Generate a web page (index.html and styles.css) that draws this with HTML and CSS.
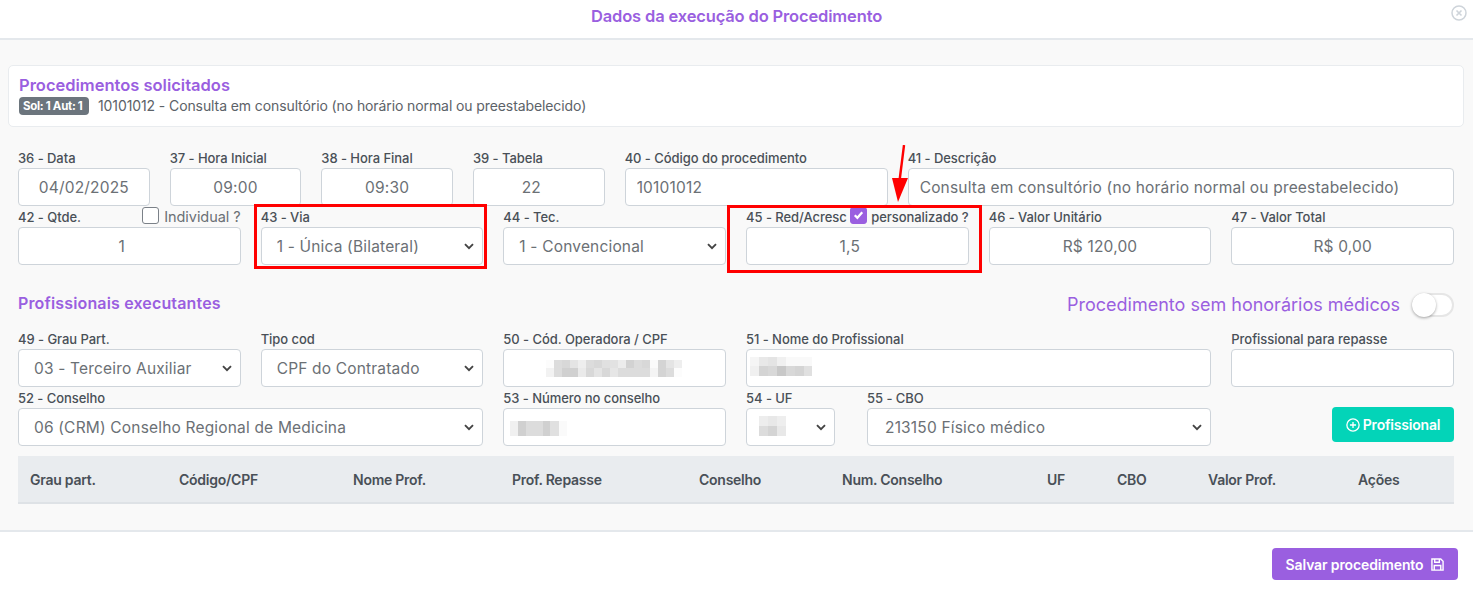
FILE: index.html
```html
<!DOCTYPE html>
<html lang="pt-BR">
<head>
<meta charset="utf-8">
<title>Dados da execução do Procedimento</title>
<link rel="stylesheet" href="styles.css">
</head>
<body>
<div class="modal">
  <header class="modal-head">
    <h1>Dados da execução do Procedimento</h1>
    <svg class="close" viewBox="0 0 16 16" width="16" height="16" fill="none" stroke="#ced4da"><circle cx="8" cy="8" r="7" stroke-width="1.5"/><path d="M5.5 5.5l5 5M10.5 5.5l-5 5" stroke-width="1.6"/></svg>
  </header>
  <main class="modal-body">
    <section class="card">
      <h2>Procedimentos solicitados</h2>
      <p class="proc"><span class="badge">Sol: 1 Aut: 1</span>10101012 - Consulta em consultório (no horário normal ou preestabelecido)</p>
    </section>
    <div class="form">
      <div class="row-top">
        <div class="field w132"><label>36 - Data</label><input class="center" value="04/02/2025"></div>
        <div class="field w132"><label>37 - Hora Inicial</label><input class="center" value="09:00"></div>
        <div class="field w132"><label>38 - Hora Final</label><input class="center" value="09:30"></div>
        <div class="field w132"><label>39 - Tabela</label><input class="center num" value="22"></div>
        <div class="field w263"><label>40 - Código do procedimento</label><input value="10101012"></div>
        <div class="field grow"><label>41 - Descrição</label><input value="Consulta em consultório (no horário normal ou preestabelecido)"></div>
      </div>
      <div class="grid six">
        <div class="field">
          <div class="label-row"><label>42 - Qtde.</label><span class="check-label"><span class="checkbox"></span>Individual ?</span></div>
          <input class="center num" value="1">
        </div>
        <div class="field"><label>43 - Via</label><select><option>1 - Única (Bilateral)</option></select></div>
        <div class="field"><label>44 - Tec.</label><select><option>1 - Convencional</option></select></div>
        <div class="field">
          <div class="label-row"><label>45 - Red/Acresc</label><span class="checkbox checked"><svg viewBox="0 0 16 16" width="16" height="16" fill="none" stroke="#fff" stroke-width="2.4"><path d="M4 8.2l2.8 2.8L12 5"/></svg></span><label>personalizado ?</label></div>
          <input class="center num" value="1,5">
        </div>
        <div class="field"><label>46 - Valor Unitário</label><input class="center" value="R$ 120,00"></div>
        <div class="field"><label>47 - Valor Total</label><input class="center" value="R$ 0,00"></div>
      </div>
      <div class="section-head">
        <h2>Profissionais executantes</h2>
        <div class="toggle-wrap"><span>Procedimento sem honorários médicos</span><span class="toggle"><span class="knob"></span></span></div>
      </div>
      <div class="grid six">
        <div class="field"><label>49 - Grau Part.</label><select><option>03 - Terceiro Auxiliar</option></select></div>
        <div class="field"><label>Tipo cod</label><select><option>CPF do Contratado</option></select></div>
        <div class="field">
          <label>50 - Cód. Operadora / CPF</label>
          <div class="masked"><input>
            <svg class="mosaic m-cpf" width="136" height="17" viewBox="0 0 136 17">
              <rect x="0" y="0" width="8" height="8" fill="#fcfcfc"/><rect x="8" y="0" width="8" height="8" fill="#dcdcdc"/><rect x="16" y="0" width="8" height="8" fill="#d8d8d8"/><rect x="24" y="0" width="8" height="8" fill="#e4e4e4"/><rect x="32" y="0" width="8" height="8" fill="#eeeeee"/><rect x="40" y="0" width="8" height="8" fill="#dcdcdc"/><rect x="48" y="0" width="8" height="8" fill="#d8d8d8"/><rect x="56" y="0" width="8" height="8" fill="#e0e0e0"/><rect x="64" y="0" width="8" height="8" fill="#e2e2e2"/><rect x="72" y="0" width="8" height="8" fill="#ececec"/><rect x="80" y="0" width="8" height="8" fill="#d2d2d2"/><rect x="88" y="0" width="8" height="8" fill="#dcdcdc"/><rect x="96" y="0" width="8" height="8" fill="#d8d8d8"/><rect x="104" y="0" width="8" height="8" fill="#fafafa"/><rect x="112" y="0" width="8" height="8" fill="#d4d4d4"/><rect x="120" y="0" width="8" height="8" fill="#e4e4e4"/><rect x="128" y="0" width="8" height="8" fill="#eeeeee"/>
              <rect x="0" y="8" width="8" height="9" fill="#f2f2f2"/><rect x="8" y="8" width="8" height="9" fill="#dcdcdc"/><rect x="16" y="8" width="16" height="9" fill="#d0d0d0"/><rect x="32" y="8" width="8" height="9" fill="#eaeaea"/><rect x="40" y="8" width="8" height="9" fill="#d8d8d8"/><rect x="48" y="8" width="8" height="9" fill="#e4e4e4"/><rect x="56" y="8" width="8" height="9" fill="#d8d8d8"/><rect x="64" y="8" width="8" height="9" fill="#e6e6e6"/><rect x="72" y="8" width="8" height="9" fill="#dcdcdc"/><rect x="80" y="8" width="24" height="9" fill="#dcdcdc"/><rect x="104" y="8" width="8" height="9" fill="#f4f4f4"/><rect x="112" y="8" width="8" height="9" fill="#d4d4d4"/><rect x="120" y="8" width="8" height="9" fill="#dcdcdc"/><rect x="128" y="8" width="8" height="9" fill="#fcfcfc"/>
            </svg>
          </div>
        </div>
        <div class="field span2">
          <label>51 - Nome do Profissional</label>
          <div class="masked"><input>
            <svg class="mosaic m-name" width="62" height="19" viewBox="0 0 62 19">
              <rect x="0" y="0" width="9" height="9" fill="#f5f5f5"/><rect x="9" y="0" width="9" height="9" fill="#e8e8e8"/><rect x="18" y="0" width="9" height="9" fill="#e4e4e4"/><rect x="27" y="0" width="9" height="9" fill="#f0f0f0"/><rect x="36" y="0" width="26" height="9" fill="#f9f9f9"/>
              <rect x="0" y="9" width="9" height="10" fill="#f0f0f0"/><rect x="9" y="9" width="9" height="10" fill="#d4d4d4"/><rect x="18" y="9" width="9" height="10" fill="#d8d8d8"/><rect x="27" y="9" width="9" height="10" fill="#c8c8c8"/><rect x="36" y="9" width="9" height="10" fill="#d8d8d8"/><rect x="45" y="9" width="9" height="10" fill="#d4d4d4"/><rect x="54" y="9" width="8" height="10" fill="#e0e0e0"/>
            </svg>
          </div>
        </div>
        <div class="field"><label>Profissional para repasse</label><input></div>
      </div>
      <div class="grid six">
        <div class="field span2"><label>52 - Conselho</label><select><option>06 (CRM) Conselho Regional de Medicina</option></select></div>
        <div class="field">
          <label>53 - Número no conselho</label>
          <div class="masked"><input>
            <svg class="mosaic m-num" width="57" height="15" viewBox="0 0 57 15">
              <rect x="0" width="8" height="15" fill="#f0f0f0"/><rect x="8" width="8" height="15" fill="#d0d0d0"/><rect x="16" width="17" height="15" fill="#dcdcdc"/><rect x="33" width="7" height="15" fill="#d0d0d0"/><rect x="40" width="9" height="15" fill="#e0e0e0"/><rect x="49" width="8" height="15" fill="#fafafa"/>
            </svg>
          </div>
        </div>
        <div class="span2 uf-cbo">
          <div class="field uf">
            <label>54 - UF</label>
            <div class="masked"><select><option></option></select>
              <svg class="mosaic m-uf" width="27" height="20" viewBox="0 0 27 20">
                <rect width="9" height="10" fill="#ededed"/><rect x="9" width="9" height="10" fill="#e8e8e8"/><rect x="18" width="9" height="10" fill="#eeeeee"/>
                <rect y="10" width="9" height="10" fill="#dcdcdc"/><rect x="9" y="10" width="9" height="10" fill="#d4d4d4"/><rect x="18" y="10" width="9" height="10" fill="#e8e8e8"/>
              </svg>
            </div>
          </div>
          <div class="field grow"><label>55 - CBO</label><select class="wide-pad"><option>213150 Físico médico</option></select></div>
        </div>
        <div class="btn-cell">
          <button class="btn teal" type="button"><svg viewBox="0 0 16 16" width="14" height="14" fill="none" stroke="#fff" stroke-width="1.5"><circle cx="8" cy="8" r="7"/><path d="M8 4.5v7M4.5 8h7"/></svg>Profissional</button>
        </div>
      </div>
      <table class="pro-table">
        <colgroup><col class="c1"><col class="c2"><col class="c3"><col class="c4"><col class="c5"><col class="c6"><col class="c7"><col class="c8"><col class="c9"><col class="c10"></colgroup>
        <thead><tr><th>Grau part.</th><th>Código/CPF</th><th>Nome Prof.</th><th>Prof. Repasse</th><th>Conselho</th><th>Num. Conselho</th><th>UF</th><th>CBO</th><th>Valor Prof.</th><th>Ações</th></tr></thead>
      </table>
    </div>
  </main>
  <footer class="modal-foot">
    <button class="btn purple" type="button">Salvar procedimento<svg viewBox="0 0 14 14" width="13" height="13" fill="none" stroke="#fff" stroke-width="1.5"><path d="M1 1h9.5L13 3.5V13H1z"/><path d="M4 1v3.5h5V1M3.5 13V8h7v5"/></svg></button>
  </footer>
  <div class="mark mark-via"></div>
  <div class="mark mark-red"></div>
  <svg class="arrow" width="20" height="62" viewBox="0 0 20 62"><path d="M14 0L9 40" stroke="#f00" stroke-width="2.4"/><path d="M2 33h16L8 57z" fill="#f00"/></svg>
</div>
</body>
</html>
```

FILE: styles.css
```css
* { box-sizing: border-box; }
html, body { margin: 0; height: 596px; overflow: hidden; }
body { font-family: Inter, "Liberation Sans", sans-serif; color: #495057; background: #fff; }

.modal { position: relative; height: 596px; display: flex; flex-direction: column; }

.modal-head { position: relative; height: 40px; flex: none; display: flex; align-items: center; justify-content: center; background: #fff; border-bottom: 2px solid #e4e8ec; }
.modal-head h1 { margin: 0 0 7px; font-size: 16.5px; font-weight: 600; color: #9a5fe0; letter-spacing: -0.15px; }
.close { position: absolute; right: 6px; top: 5px; }

.modal-body { flex: none; height: 492px; background: #f9f9f9; border-bottom: 2px solid #e4e8ec; padding: 25px 9px 0 8px; }

.card { height: 62px; background: #fff; border: 1px solid #e9ecef; border-radius: 5px; padding: 9px 10px 0; }
h2 { margin: 0; font-size: 16.5px; line-height: 20px; font-weight: 600; color: #9a5fe0; }
.proc { margin: 2px 0 0; font-size: 14px; line-height: 18px; color: #5c6268; display: flex; align-items: center; letter-spacing: -0.1px; }
.badge { background: #6c757d; color: #fff; font-size: 11.5px; font-weight: 700; border-radius: 4px; height: 18px; line-height: 18px; padding: 0 4px; width: 70px; margin-right: 9px; white-space: nowrap; letter-spacing: -0.3px; }

.form { padding: 21px 10px 0 10px; }
.row-top { display: flex; gap: 20px; margin-bottom: 1px; }
.grid { display: grid; }
.six { grid-template-columns: repeat(6, 1fr); column-gap: 20px; row-gap: 1px; margin-bottom: 1px; }
.span2 { grid-column: span 2; }
.w132 { width: 131.67px; flex: none; }
.w263 { width: 263px; flex: none; }
.grow { flex: 1; min-width: 0; }

.field { display: flex; flex-direction: column; min-width: 0; }
label { display: block; font-size: 13px; line-height: 20px; font-weight: 500; color: #495057; white-space: nowrap; letter-spacing: -0.05px; }
.label-row { display: flex; align-items: center; justify-content: space-between; height: 20px; }

input, select { width: 100%; height: 38px; background-color: #fff; border: 1px solid #ced4da; border-radius: 4px; font: 400 15.5px Inter, "Liberation Sans", sans-serif; color: #6b7075; padding: 0 11px; outline: 0; letter-spacing: 0.18px; }
select { appearance: none; -webkit-appearance: none; padding-left: 15px; padding-right: 24px; background-image: url("data:image/svg+xml,%3Csvg xmlns='http://www.w3.org/2000/svg' width='10' height='7' viewBox='0 0 10 7'%3E%3Cpath d='M1 1.2l4 4 4-4' fill='none' stroke='%23444' stroke-width='1.9'/%3E%3C/svg%3E"); background-repeat: no-repeat; background-position: right 8px center; }
.wide-pad { padding-left: 17px; }
.center { text-align: center; }
.num { padding-right: 26px; }

.check-label { display: flex; align-items: center; font-size: 14.5px; color: #6b7075; letter-spacing: -0.05px; margin-top: -2px; }
.checkbox { display: inline-block; width: 17px; height: 17px; border: 1px solid #7b8188; border-radius: 3px; background: #fff; margin-right: 5px; margin-top: -1px; flex: none; }
.checkbox.checked { background: #9a5fe0; border-color: #9a5fe0; margin: -4px 0 0; width: 17px; height: 17px; display: flex; align-items: center; justify-content: center; }

.section-head { display: flex; align-items: center; justify-content: space-between; height: 63px; padding-top: 12px; }
.section-head h2 { font-size: 16px; letter-spacing: 0.15px; margin-top: -1px; }
.toggle-wrap { display: flex; align-items: center; gap: 12px; color: #9a5fe0; font-size: 18px; margin-top: 2px; }
.toggle { width: 42px; height: 24px; border-radius: 12px; background: #fff; border: 2px solid #e6e6e6; position: relative; display: block; }
.knob { position: absolute; left: -2px; top: -2px; width: 24px; height: 24px; border-radius: 50%; background: #fff; box-shadow: 0 1px 3px rgba(0,0,0,.35); }

.masked { position: relative; }
.mosaic { position: absolute; }
.m-cpf { left: 43px; top: 11px; }
.m-name { left: 4px; top: 8px; }
.m-num { left: 7px; top: 13px; }
.m-uf { left: 13px; top: 8px; }

.uf-cbo { display: flex; gap: 32px; }
.uf { width: 89px; flex: none; }

.btn-cell { grid-column: 6; display: flex; justify-content: flex-end; align-items: flex-end; padding-bottom: 4px; }
.btn { border: 0; border-radius: 4px; color: #fff; font: 600 14px Inter, "Liberation Sans", sans-serif; display: inline-flex; align-items: center; justify-content: center; letter-spacing: -0.2px; }
.teal { background: #03d4b8; width: 122px; height: 35px; gap: 3px; }
.purple { background: #9a5fe0; width: 186px; height: 32px; gap: 8px; letter-spacing: -0.13px; }

.pro-table { width: 100%; table-layout: fixed; border-collapse: collapse; margin-top: 10px; }
.pro-table th { height: 47px; background: #e9ecef; border-bottom: 2px solid #dee2e6; text-align: left; padding: 0 0 0 12px; font-size: 14px; font-weight: 600; color: #495057; white-space: nowrap; letter-spacing: -0.25px; }
.c1 { width: 149px; } .c2 { width: 174px; } .c3 { width: 159px; } .c4 { width: 187px; } .c5 { width: 143px; }
.c6 { width: 205px; } .c7 { width: 70px; } .c8 { width: 91px; } .c9 { width: 150px; } .c10 { width: 108px; }

.modal-foot { flex: 1; display: flex; justify-content: flex-end; align-items: flex-start; padding: 16px 15px 0 0; background: #fff; }

.mark { position: absolute; border: 3px solid #f00; pointer-events: none; }
.mark-via { left: 254px; top: 204px; width: 233px; height: 65px; }
.mark-red { left: 727px; top: 205px; width: 255px; height: 68px; }
.arrow { position: absolute; left: 890px; top: 145px; }
```
